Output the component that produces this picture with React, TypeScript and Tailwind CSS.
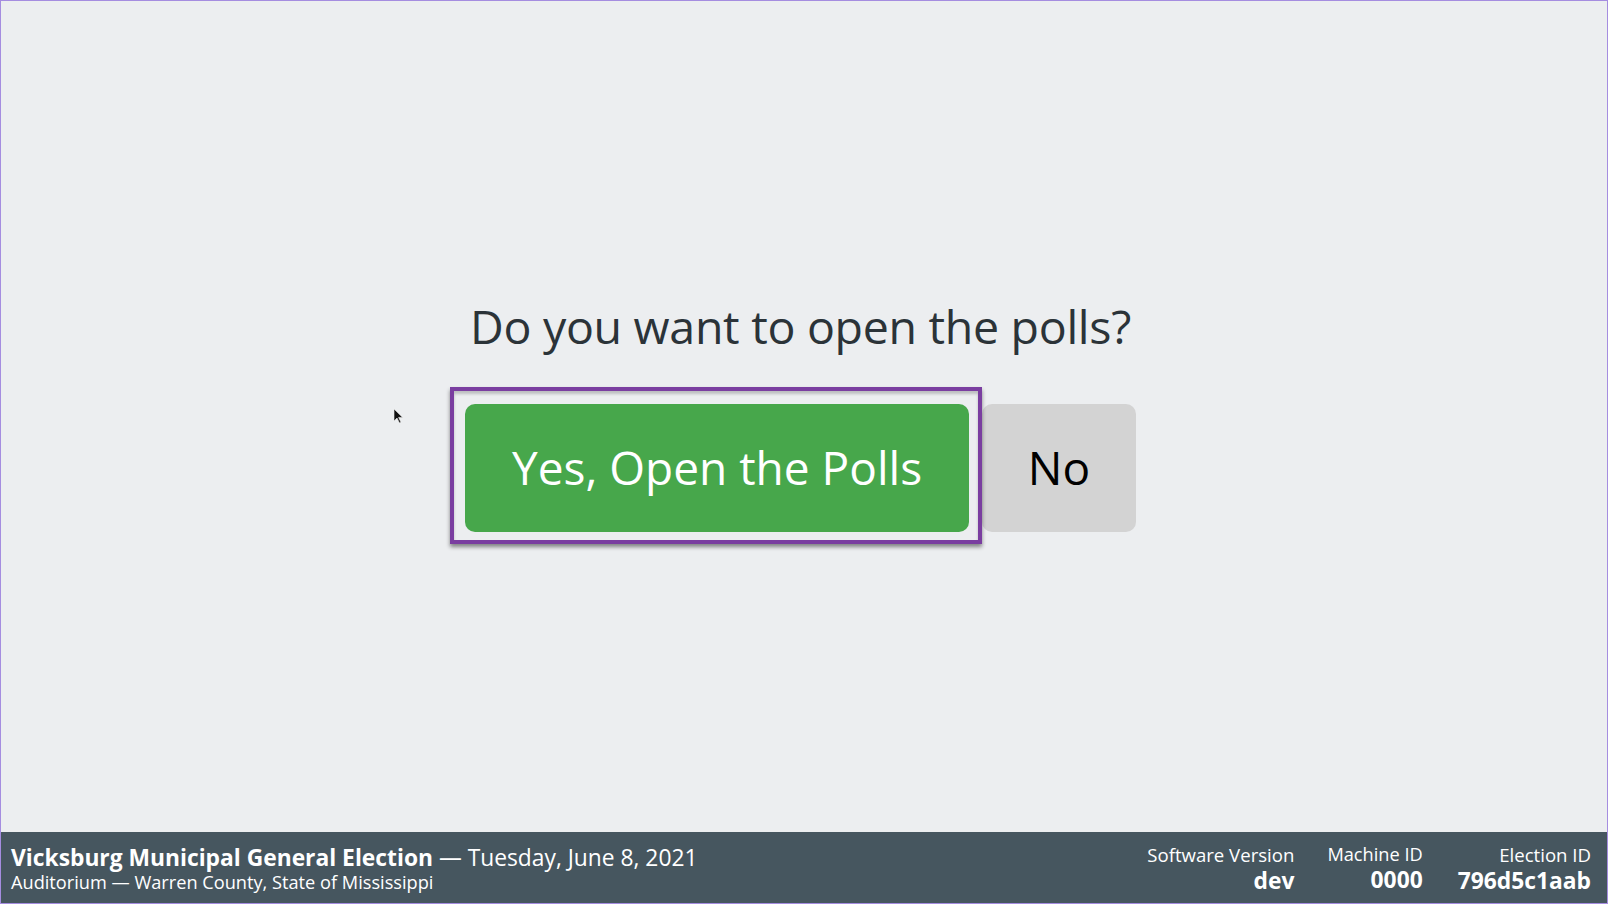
import React from 'react';

export default function App() {
  return (
    <div
      className="w-[1608px] h-[904px] flex flex-col bg-[#eceef0] border border-[#a58de0] overflow-hidden relative"
      style={{ fontFamily: '"Open Sans", "Noto Sans", sans-serif' }}
    >
      <main className="flex-1 flex flex-col items-center justify-center pb-[5px] pr-[7px]">
        <h1 className="text-[46.5px] leading-[58px] text-[#2b3338] tracking-[-0.3px]">
          Do you want to open the polls?
        </h1>
        <div className="mt-[49px] flex items-center gap-[13px]">
          <button className="relative w-[504px] h-[128px] rounded-[10px] bg-[#47a74b] text-white text-[46px]">
            Yes, Open the Polls
            <span className="pointer-events-none absolute -top-[17px] -bottom-[12px] -left-[15px] -right-[13px] border-4 border-[#7a3ea0] shadow-[0_3px_4px_rgba(0,0,0,0.45),inset_0_3px_3px_rgba(0,0,0,0.2)]" />
          </button>
          <button className="w-[154px] h-[128px] rounded-[10px] bg-[#d3d3d3] text-black text-[46px]">
            No
          </button>
        </div>
      </main>

      <footer className="h-[71px] bg-[#46565f] text-white flex items-center justify-between px-[10px]">
        <div className="mt-[5px]">
          <div className="text-[22.8px] leading-[24px]">
            <span className="font-bold">Vicksburg Municipal General Election</span>
            <span> — Tuesday, June 8, 2021</span>
          </div>
          <div className="text-[18.2px] leading-[24px]">Auditorium — Warren County, State of Mississippi</div>
        </div>
        <div className="flex pr-[6px] mt-[3px] text-right leading-tight">
          <div>
            <div className="text-[18.6px]">Software Version</div>
            <div className="text-[22.8px] font-bold mt-[1px]">dev</div>
          </div>
          <div className="ml-[33px]">
            <div className="text-[18.2px]">Machine ID</div>
            <div className="text-[22.8px] font-bold mt-[1px]">0000</div>
          </div>
          <div className="ml-[35px]">
            <div className="text-[18.6px]">Election ID</div>
            <div className="text-[22.8px] font-bold mt-[1px]">796d5c1aab</div>
          </div>
        </div>
      </footer>

      <svg className="absolute left-[392px] top-[407px]" width="11" height="16" viewBox="0 0 11 16">
        <path d="M1 1 L1 13 L4 10 L6.5 15 L8 14.3 L5.6 9.4 L9.6 9.4 Z" fill="#111" stroke="#eee" strokeWidth="0.6" />
      </svg>
    </div>
  );
}
